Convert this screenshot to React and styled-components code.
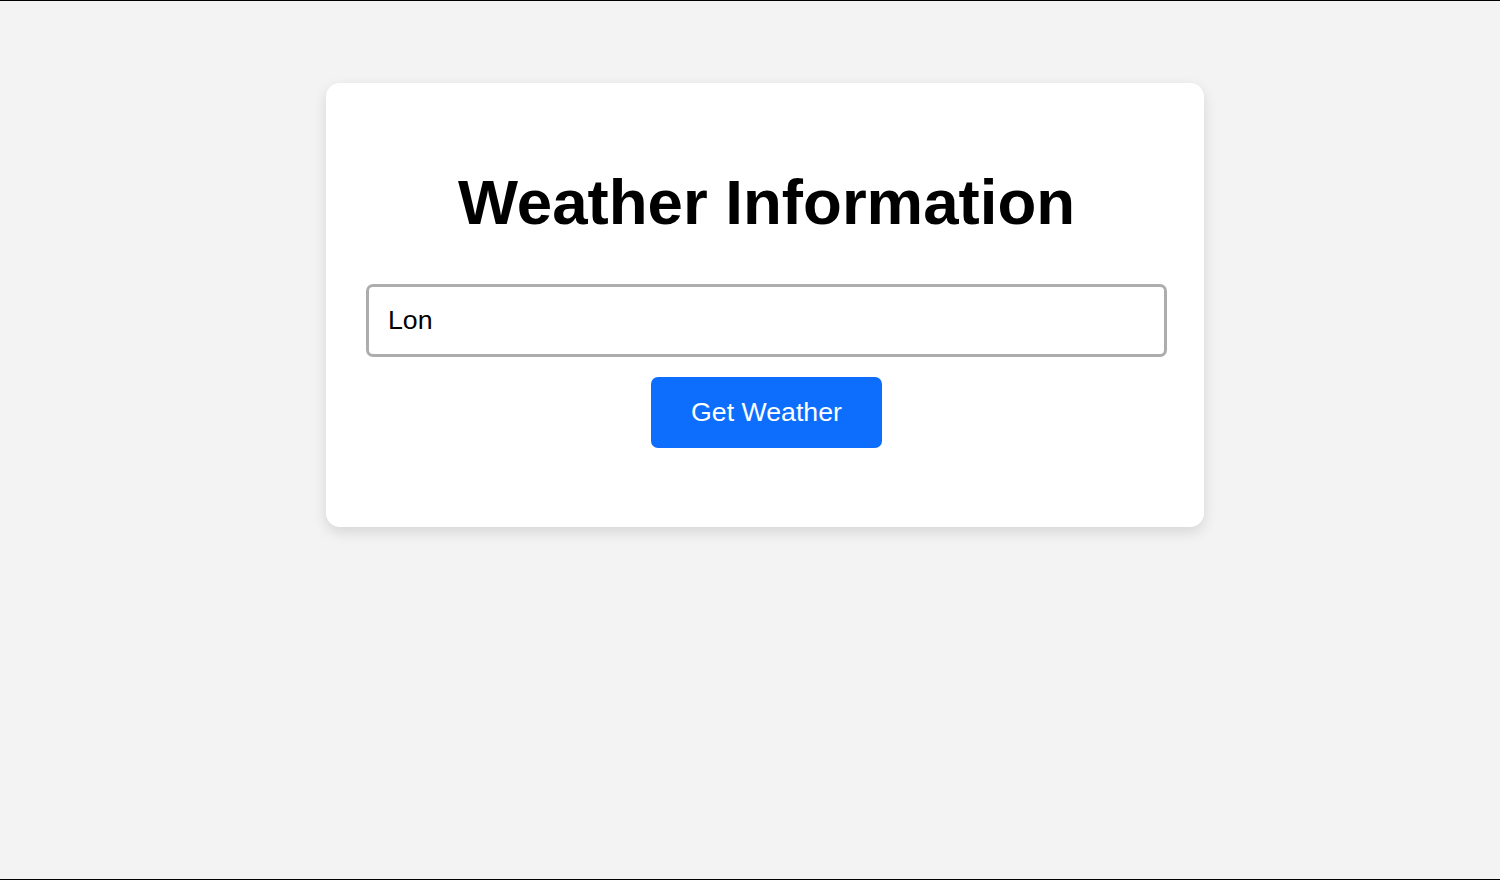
import React, { useState } from "react";
import styled, { createGlobalStyle } from "styled-components";

const GlobalStyle = createGlobalStyle`
  *, *::before, *::after { box-sizing: border-box; }
  html, body { margin: 0; padding: 0; }
  body {
    background: #f3f3f3;
    font-family: "Liberation Sans", Arial, sans-serif;
  }
`;

const Page = styled.div`
  height: 880px;
  border-top: 1px solid #000;
  border-bottom: 1px solid #000;
  display: flex;
  justify-content: center;
  align-items: flex-start;
  padding: 82px 0 0 30px;
`;

const Card = styled.main`
  width: 878px;
  height: 444px;
  background: #fff;
  border-radius: 14px;
  box-shadow: 0 5px 14px rgba(0, 0, 0, 0.12);
  padding: 82px 37px 0 40px;
  display: flex;
  flex-direction: column;
  align-items: center;
`;

const Title = styled.h1`
  margin: 0 0 46px;
  font-size: 63.6px;
  font-weight: 700;
  line-height: 1.15;
  color: #000;
  text-align: center;
`;

const CityInput = styled.input`
  width: 801px;
  height: 73px;
  border: 3px solid #adadad;
  border-radius: 7px;
  padding: 0 19px;
  font-family: "Liberation Sans", Arial, sans-serif;
  font-size: 26.7px;
  color: #000;
  background: #fff;
  outline: none;
  caret-color: #000;
`;

const Button = styled.button`
  margin-top: 20px;
  height: 71px;
  padding: 0 40px;
  border: none;
  border-radius: 7px;
  background: #0d6efd;
  color: #fff;
  font-family: "Liberation Sans", Arial, sans-serif;
  font-size: 26.7px;
  cursor: pointer;
`;

export default function App() {
  const [city, setCity] = useState("Lon");
  return (
    <>
      <GlobalStyle />
      <Page>
        <Card>
          <Title>Weather Information</Title>
          <CityInput
            autoFocus
            value={city}
            onChange={(e) => setCity(e.target.value)}
          />
          <Button>Get Weather</Button>
        </Card>
      </Page>
    </>
  );
}
